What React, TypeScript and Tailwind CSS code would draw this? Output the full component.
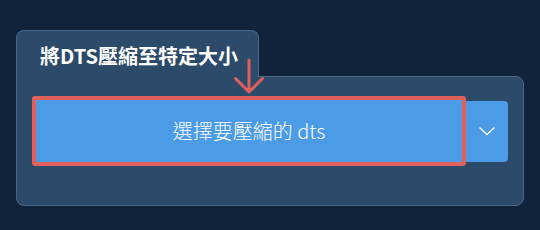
export default function App() {
  return (
    <div
      className="relative w-[540px] h-[230px] bg-[#11233a] pt-[30px] px-4"
      style={{ fontFamily: '"Noto Sans CJK TC", "Noto Sans", sans-serif' }}
    >
      <div className="relative z-10 -mb-px flex h-[47px] w-[243px] items-start rounded-t-lg border border-b-0 border-[#4d6685] bg-[#2c4a6a] pl-[23px] pt-[12px]">
        <span className="text-[20px] font-bold leading-[26px] text-white">將DTS壓縮至特定大小</span>
      </div>
      <div className="flex h-[130px] w-[508px] items-start rounded-lg rounded-tl-none border border-[#4d6685] bg-[#2c4a6a] pl-[15px] pt-[19px]">
        <div className="flex items-center">
          <button className="flex h-[70px] w-[434px] items-center justify-center rounded-[3px] border-4 border-[#e0605b] bg-[#4b9be6] text-[20px] font-light text-white">
            選擇要壓縮的 dts
          </button>
          <button className="flex h-[61px] w-[42px] items-center justify-center rounded-r-[4px] bg-[#4b9be6]">
            <svg width="18" height="10" viewBox="0 0 18 10" fill="none">
              <path d="M1.5 1.5 L9 8.5 L16.5 1.5" stroke="white" strokeWidth="1.3" />
            </svg>
          </button>
        </div>
      </div>
      <svg
        className="absolute left-[233px] top-[58px] z-20"
        width="32"
        height="38"
        viewBox="0 0 32 38"
        fill="none"
      >
        <path d="M16 2 L16 34 M2.5 20.5 L16 34 L29.5 20.5" stroke="#e0605b" strokeWidth="3" strokeLinecap="round" strokeLinejoin="round" />
      </svg>
    </div>
  );
}
